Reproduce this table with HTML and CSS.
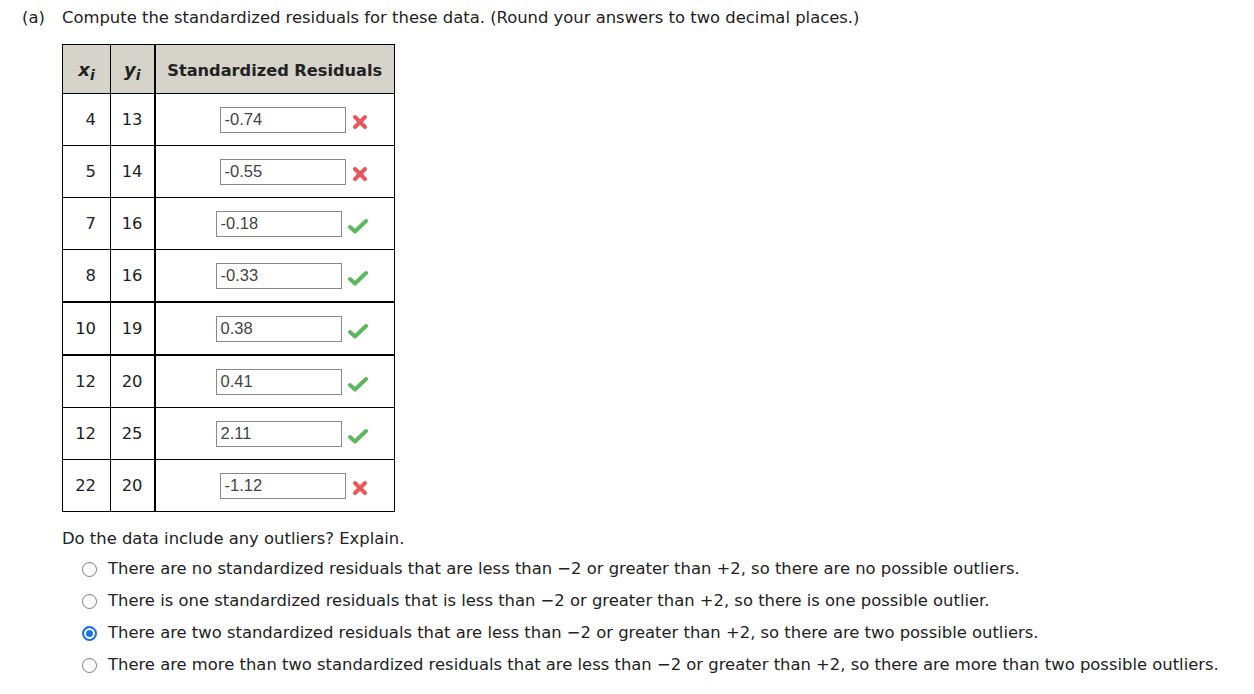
FILE: index.html
```html
<!DOCTYPE html>
<html>
<head>
<meta charset="utf-8">
<link rel="stylesheet" href="styles.css">
</head>
<body>
<div class="part">
  <div class="part-label">(a)</div>
  <div class="part-body">
    <p class="prompt">Compute the standardized residuals for these data. (Round your answers to two decimal places.)</p>
    <table class="data">
      <colgroup><col class="w-x"><col class="w-y"><col class="w-r"></colgroup>
      <thead>
        <tr>
          <th class="cx"><i>x<sub>i</sub></i></th>
          <th class="cy"><i>y<sub>i</sub></i></th>
          <th class="cr">Standardized Residuals</th>
        </tr>
      </thead>
      <tbody>
        <tr><td class="cx">4</td><td class="cy">13</td><td class="cr"><div class="ans wrong"><span class="box">-0.74</span><svg class="ico-x" viewBox="0 0 16 16"><path d="M3 3 L13 13 M13 3 L3 13" stroke="#e8575a" stroke-width="4" stroke-linecap="round"/></svg></div></td></tr>
        <tr><td class="cx">5</td><td class="cy">14</td><td class="cr"><div class="ans wrong"><span class="box">-0.55</span><svg class="ico-x" viewBox="0 0 16 16"><path d="M3 3 L13 13 M13 3 L3 13" stroke="#e8575a" stroke-width="4" stroke-linecap="round"/></svg></div></td></tr>
        <tr><td class="cx">7</td><td class="cy">16</td><td class="cr"><div class="ans right"><span class="box">-0.18</span><svg class="ico-ok" viewBox="0 0 22 16"><path d="M3 9 L8 13.5 L19 3" fill="none" stroke="#5cb85c" stroke-width="4" stroke-linecap="round" stroke-linejoin="round"/></svg></div></td></tr>
        <tr><td class="cx">8</td><td class="cy">16</td><td class="cr"><div class="ans right"><span class="box">-0.33</span><svg class="ico-ok" viewBox="0 0 22 16"><path d="M3 9 L8 13.5 L19 3" fill="none" stroke="#5cb85c" stroke-width="4" stroke-linecap="round" stroke-linejoin="round"/></svg></div></td></tr>
        <tr class="thick"><td class="cx">10</td><td class="cy">19</td><td class="cr"><div class="ans right"><span class="box">0.38</span><svg class="ico-ok" viewBox="0 0 22 16"><path d="M3 9 L8 13.5 L19 3" fill="none" stroke="#5cb85c" stroke-width="4" stroke-linecap="round" stroke-linejoin="round"/></svg></div></td></tr>
        <tr><td class="cx">12</td><td class="cy">20</td><td class="cr"><div class="ans right"><span class="box">0.41</span><svg class="ico-ok" viewBox="0 0 22 16"><path d="M3 9 L8 13.5 L19 3" fill="none" stroke="#5cb85c" stroke-width="4" stroke-linecap="round" stroke-linejoin="round"/></svg></div></td></tr>
        <tr><td class="cx">12</td><td class="cy">25</td><td class="cr"><div class="ans right"><span class="box">2.11</span><svg class="ico-ok" viewBox="0 0 22 16"><path d="M3 9 L8 13.5 L19 3" fill="none" stroke="#5cb85c" stroke-width="4" stroke-linecap="round" stroke-linejoin="round"/></svg></div></td></tr>
        <tr><td class="cx">22</td><td class="cy">20</td><td class="cr"><div class="ans wrong"><span class="box">-1.12</span><svg class="ico-x" viewBox="0 0 16 16"><path d="M3 3 L13 13 M13 3 L3 13" stroke="#e8575a" stroke-width="4" stroke-linecap="round"/></svg></div></td></tr>
      </tbody>
    </table>
    <p class="question">Do the data include any outliers? Explain.</p>
    <ul class="choices">
      <li><span class="radio"></span>There are no standardized residuals that are less than −2 or greater than +2, so there are no possible outliers.</li>
      <li><span class="radio"></span>There is one standardized residuals that is less than −2 or greater than +2, so there is one possible outlier.</li>
      <li><span class="radio checked"></span>There are two standardized residuals that are less than −2 or greater than +2, so there are two possible outliers.</li>
      <li><span class="radio"></span>There are more than two standardized residuals that are less than −2 or greater than +2, so there are more than two possible outliers.</li>
    </ul>
  </div>
</div>
</body>
</html>
```

FILE: styles.css
```css
html, body {
  margin: 0;
  padding: 0;
  background: #fff;
}
body {
  font-family: "DejaVu Sans", Verdana, sans-serif;
  font-size: 16.4px;
  color: #222;
}
.part {
  display: flex;
  padding: 9px 0 0 22px;
}
.part-label {
  width: 40px;
  flex: none;
  line-height: 18px;
}
.part-body {
  flex: 1;
}
.prompt {
  margin: 0;
  line-height: 18px;
}
.data {
  margin-top: 17px;
  border-collapse: collapse;
  border: 1px solid #000;
  table-layout: fixed;
  width: 332px;
}
.w-x { width: 48px; }
.w-y { width: 44px; }
.w-r { width: 240px; }
.data th, .data td {
  border: 1px solid #000;
  padding: 0;
}
.data th {
  background: #d6d3cb;
  height: 49px;
  padding-top: 3px;
  box-sizing: border-box;
  font-weight: bold;
  color: #222;
  font-size: 16.2px;
}
.data td {
  height: 51px;
}
.data th i {
  font-size: 18px;
}
.data sub {
  font-size: 14px;
  vertical-align: -4px;
}
.data td.cx {
  text-align: right;
  padding-right: 14px;
}
.data td.cy {
  text-align: right;
  padding-right: 11px;
}
.data .cy {
  border-right: 2px solid #000;
}
.data th.cx, .data th.cy {
  text-align: center;
}
.data th.cr {
  white-space: nowrap;
}
.data tr.thick td {
  border-top: 2px solid #000;
  border-bottom: 2px solid #000;
}
.ans {
  display: flex;
  align-items: center;
}
.ans.wrong { padding-left: 64px; }
.ans.right { padding-left: 60px; }
.box {
  box-sizing: border-box;
  width: 126px;
  height: 26px;
  border: 1px solid #8a8a8a;
  font-family: "Liberation Sans", Arial, sans-serif;
  font-size: 16.5px;
  color: #444;
  padding: 2px 0 0 4px;
  line-height: 19px;
}
.ico-x {
  width: 16px;
  height: 16px;
  margin-left: 6px;
  margin-top: 4px;
}
.ico-ok {
  width: 22px;
  height: 16px;
  margin-left: 5px;
  margin-top: 4px;
}
.question {
  margin: 17px 0 0;
  line-height: 20px;
}
.choices {
  list-style: none;
  margin: 4px 0 0;
  padding: 0 0 0 20px;
}
.choices li {
  display: flex;
  align-items: center;
  height: 32px;
  line-height: 20px;
  white-space: nowrap;
}
.radio {
  box-sizing: border-box;
  width: 15px;
  height: 15px;
  border: 1px solid #767676;
  border-radius: 50%;
  margin-right: 11px;
  flex: none;
  background: #fff;
}
.radio.checked {
  border: 2px solid #1a73e8;
  box-shadow: inset 0 0 0 2px #fff;
  background: #1a73e8;
}
```
